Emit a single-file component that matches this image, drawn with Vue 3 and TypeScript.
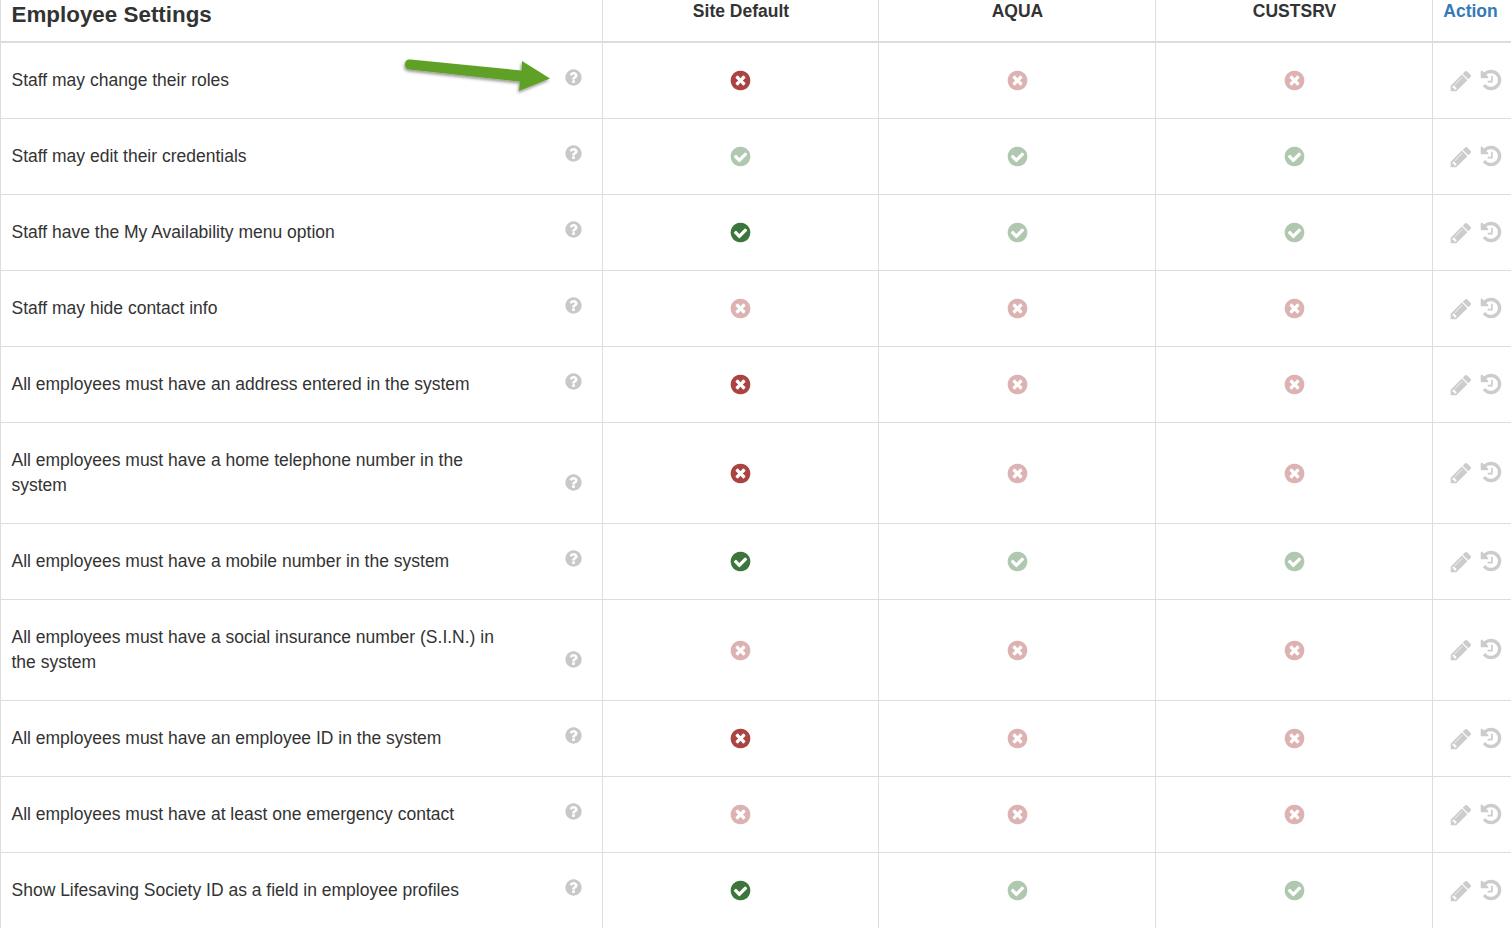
<script setup lang="ts">
const CHECK = 'M1412 734q0-28-18-46l-91-90q-19-19-45-19t-45 19l-408 407-226-226q-19-19-45-19t-45 19l-91 90q-18 18-18 46 0 27 18 45l362 362q19 19 45 19 27 0 46-19l543-543q18-18 18-45zm252 162q0 209-103 385.500t-279.500 279.500-385.500 103-385.500-103-279.500-279.500-103-385.500 103-385.500 279.500-279.500 385.500-103 385.500 103 279.500 279.500 103 385.500z'
const CROSS = 'M1277 1122q0-26-19-45l-181-181 181-181q19-19 19-45 0-27-19-46l-90-90q-19-19-46-19-26 0-45 19l-181 181-181-181q-19-19-45-19-27 0-46 19l-90 90q-19 19-19 46 0 26 19 45l181 181-181 181q-19 19-19 45 0 27 19 46l90 90q19 19 46 19 26 0 45-19l181-181 181 181q19 19 45 19 27 0 46-19l90-90q19-19 19-46zm387-226q0 209-103 385.500t-279.500 279.500-385.500 103-385.500-103-279.500-279.500-103-385.500 103-385.500 279.500-279.500 385.500-103 385.500 103 279.500 279.500 103 385.500z'
const HELP = 'M1024 1376v-192q0-14-9-23t-23-9h-192q-14 0-23 9t-9 23v192q0 14 9 23t23 9h192q14 0 23-9t9-23zm256-672q0-88-55.500-163t-138.500-116-170-41q-243 0-371 213-15 24 8 42l132 100q7 6 19 6 16 0 25-12 53-68 86-92 34-24 86-24 48 0 85.500 26t37.500 59q0 38-20 61t-68 45q-63 28-115.500 86.500t-52.500 125.500v36q0 14 9 23t23 9h192q14 0 23-9t9-23q0-19 21.500-49.500t54.500-49.500q32-18 49-28.500t46-35 44.500-48 28-60.500 12.500-81zm384 192q0 209-103 385.500t-279.500 279.500-385.500 103-385.500-103-279.500-279.500-103-385.500 103-385.500 279.500-279.500 385.500-103 385.500 103 279.500 279.500 103 385.500z'
const PENCIL = 'M491 1536l91-91-235-235-91 91v107h128v128h107zm523-928q0-22-22-22-10 0-17 7l-542 542q-7 7-7 17 0 22 22 22 10 0 17-7l542-542q7-7 7-17zm-54-192l416 416-832 832h-416v-416zm683 96q0 53-37 90l-166 166-416-416 166-165q36-38 90-38 53 0 91 38l235 234q37 39 37 91z'
const HISTORY = 'M1664 896q0 156-61 298t-164 245-245 164-298 61q-172 0-327-72.500t-264-204.500q-7-10-6.500-22.500t8.500-20.500l137-138q10-9 25-9 16 2 23 12 73 95 179 147t225 52q104 0 198.500-40.500t163.500-109.500 109.500-163.500 40.500-198.500-40.500-198.500-109.500-163.500-163.500-109.500-198.500-40.500q-98 0-188 35.500t-160 101.500l137 138q31 30 14 69-17 40-59 40h-448q-26 0-45-19t-19-45v-448q0-42 40-59 39-17 69 14l130 129q107-101 244.500-156.500t284.500-55.500q156 0 298 61t245 164 164 245 61 298zm-640-288v448q0 14-9 23t-23 9h-320q-14 0-23-9t-9-23v-64q0-14 9-23t23-9h224v-352q0-14 9-23t23-9h64q14 0 23 9t9 23z'

interface Row {
  label: string
  site: boolean
  siteActive: boolean
  inherited: boolean
}

const rows: Row[] = [
  { label: 'Staff may change their roles', site: false, siteActive: true, inherited: false },
  { label: 'Staff may edit their credentials', site: true, siteActive: false, inherited: true },
  { label: 'Staff have the My Availability menu option', site: true, siteActive: true, inherited: true },
  { label: 'Staff may hide contact info', site: false, siteActive: false, inherited: false },
  { label: 'All employees must have an address entered in the system', site: false, siteActive: true, inherited: false },
  { label: 'All employees must have a home telephone number in the system', site: false, siteActive: true, inherited: false },
  { label: 'All employees must have a mobile number in the system', site: true, siteActive: true, inherited: true },
  { label: 'All employees must have a social insurance number (S.I.N.) in the system', site: false, siteActive: false, inherited: false },
  { label: 'All employees must have an employee ID in the system', site: false, siteActive: true, inherited: false },
  { label: 'All employees must have at least one emergency contact', site: false, siteActive: false, inherited: false },
  { label: 'Show Lifesaving Society ID as a field in employee profiles', site: true, siteActive: true, inherited: true },
]
</script>

<template>
  <div class="page">
    <table class="grid">
      <colgroup>
        <col class="c-name" />
        <col class="c-site" />
        <col class="c-aqua" />
        <col class="c-cust" />
        <col />
      </colgroup>
      <thead>
        <tr>
          <th class="title">Employee Settings</th>
          <th>Site Default</th>
          <th>AQUA</th>
          <th>CUSTSRV</th>
          <th class="action">Action</th>
        </tr>
      </thead>
      <tbody>
        <tr v-for="(row, i) in rows" :key="row.label">
          <td class="name">
            <div class="name-inner">
              <span class="label">{{ row.label }}</span>
              <svg class="help" viewBox="0 0 1792 1792"><path :d="HELP" /></svg>
            </div>
            <svg v-if="i === 0" class="arrow" viewBox="0 0 160 50" width="160" height="50">
              <defs>
                <filter id="arrow-shadow" x="-10%" y="-30%" width="120%" height="170%">
                  <feDropShadow dx="-1" dy="2" stdDeviation="1.5" flood-color="#000" flood-opacity="0.4" />
                </filter>
              </defs>
              <path
                filter="url(#arrow-shadow)"
                fill="#5fa125"
                d="M10.500 5.500 L121.500 16.500 L122 7 L150 24.500 L119 37 L119.800 27.500 L9.500 15.500 Q5 15 5 10.500 Q5 5 10.500 5.500 Z"
              />
            </svg>
          </td>
          <td class="state">
            <svg
              class="mark"
              :class="[row.site ? 'ok' : 'no', { faded: !row.siteActive }]"
              viewBox="0 0 1792 1792"
            ><path :d="row.site ? CHECK : CROSS" /></svg>
          </td>
          <td v-for="n in 2" :key="n" class="state">
            <svg
              class="mark faded"
              :class="row.inherited ? 'ok' : 'no'"
              viewBox="0 0 1792 1792"
            ><path :d="row.inherited ? CHECK : CROSS" /></svg>
          </td>
          <td class="tools">
            <div class="tools-inner">
              <svg class="tool pencil" viewBox="0 0 1792 1792"><path :d="PENCIL" /></svg>
              <svg class="tool history" viewBox="0 0 1792 1792"><path :d="HISTORY" /></svg>
            </div>
          </td>
        </tr>
      </tbody>
    </table>
  </div>
</template>

<style>
html, body { margin: 0; overflow: hidden; background: #fff; }
</style>

<style scoped>
.page {
  width: 1511px;
  height: 928px;
  overflow: hidden;
  font-family: "Liberation Sans", Arial, sans-serif;
  color: #333;
}
.grid {
  width: 1513px;
  table-layout: fixed;
  border-collapse: separate;
  border-spacing: 0;
  font-size: 17.5px;
  line-height: 25px;
}
.c-name { width: 603px; }
.c-site { width: 276px; }
.c-aqua { width: 277px; }
.c-cust { width: 277px; }

th {
  padding: 0 0 9px 1px;
  box-sizing: border-box;
  height: 43px;
  text-align: center;
  font-size: 17.5px;
  line-height: 22px;
  font-weight: 700;
  vertical-align: top;
  border-bottom: 2px solid #ddd;
  border-right: 1px solid #ddd;
}
th.title {
  padding: 0 0 0 10.500px;
  text-align: left;
  font-size: 22.4px;
  line-height: 29px;
  border-left: 1px solid #ddd;
}
th.action { color: #337ab7; padding-left: 0; padding-right: 4px; }

td {
  padding: 25px 0;
  border-bottom: 1px solid #ddd;
  border-right: 1px solid #ddd;
  vertical-align: middle;
}
td.name {
  position: relative;
  border-left: 1px solid #ddd;
  padding-left: 10.500px;
}
.name-inner {
  display: flex;
  align-items: flex-end;
}
.label { width: 500px; }
.help {
  width: 19px;
  height: 19px;
  margin-left: 52.500px;
  margin-bottom: 6px;
  fill: #c8c8c8;
}
.arrow {
  position: absolute;
  left: 399px;
  top: 11px;
}
.state { text-align: center; font-size: 0; line-height: 0; }
.mark { width: 23px; height: 23px; }
.ok { fill: #3c763d; }
.no { fill: #a94442; }
.faded { opacity: 0.4; }
.tools { padding-top: 0; padding-bottom: 0; }
.tools-inner {
  display: flex;
  align-items: center;
  padding-left: 16px;
  gap: 6px;
}
.tool { width: 24px; height: 24px; fill: #ccc; flex: none; }
.history { margin-top: -2px; }
</style>
